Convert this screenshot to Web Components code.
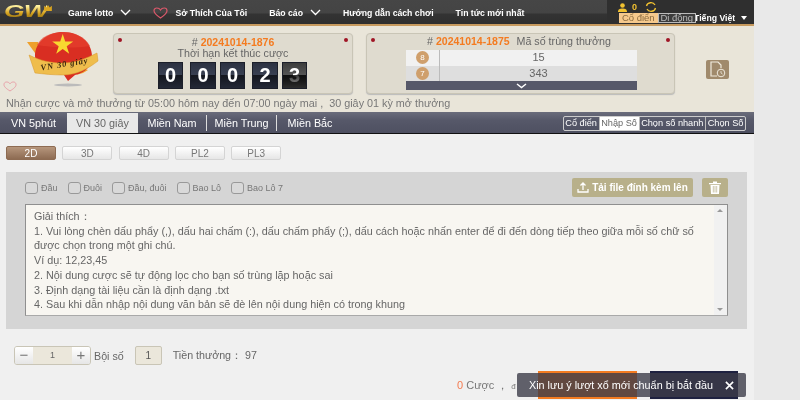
<!DOCTYPE html>
<html lang="vi">
<head>
<meta charset="utf-8">
<title>VN 30 giây</title>
<style>
  html, body { margin: 0; height: 400px; overflow: hidden; background: #e9e9e9; }
  body { font: 11px "Liberation Sans", Arial, sans-serif; color: #666; }
</style>
</head>
<body>
<gw-app>
  <gw-topbar></gw-topbar>
  <gw-draw-header></gw-draw-header>
  <gw-tabs></gw-tabs>
  <gw-bet-panel></gw-bet-panel>
  <gw-toast>Xin lưu ý lượt xổ mới chuẩn bị bắt đầu</gw-toast>
</gw-app>

<script>
class GwApp extends HTMLElement {
  constructor() {
    super();
    this.attachShadow({ mode: 'open' }).innerHTML = `
      <style>
      :host { display: block; position: relative; width: 754px; height: 400px; overflow: hidden; background: #f0f0f0; filter: blur(.35px); }
      </style>
      <slot></slot>`;
  }
}

class GwTopbar extends HTMLElement {
  constructor() {
    super();
    const chevron = `<svg width="11" height="7" viewBox="0 0 11 7"><path d="M1 1l4.500 4.500L10 1" fill="none" stroke="#fff" stroke-width="1.300"/></svg>`;
    this.attachShadow({ mode: 'open' }).innerHTML = `
      <style>
      :host { display: flex; align-items: center; box-sizing: border-box; height: 26px; background: linear-gradient(#464646 0, #444 13px, #333 14px, #2e2e2e 24px); border-bottom: 2px solid #c79a5e; color: #fff; font-size: 8.700px; font-weight: bold; }
      .logo { position: relative; width: 68px; flex: none; height: 24px; }
      .logo b { position: absolute; left: 4px; top: 2px; font: italic bold 17px/20px "Liberation Sans", sans-serif; letter-spacing: -.5px; transform: scaleX(1.550); transform-origin: 0 50%; background: linear-gradient(#fff2a0 20%, #d9a520 55%, #8a6a10 85%); -webkit-background-clip: text; background-clip: text; color: transparent; }
      .logo svg { position: absolute; left: 44px; top: 5px; }
      nav { display: flex; align-items: center; gap: 22px; flex: none; width: 539px; padding-top: 1px; }
      nav span { display: flex; align-items: center; gap: 7px; white-space: nowrap; }
      .right { position: relative; flex: 1; height: 24px; background: #2f2f2f; }
      .wallet { display: flex; align-items: center; gap: 5px; padding: 1px 0 0 11px; color: #f2c230; font-size: 9px; height: 12px; }
      .modes { display: flex; align-items: center; padding-left: 12px; font-weight: normal; }
      .modes i { font-style: normal; box-sizing: border-box; width: 38.500px; height: 10px; line-height: 10px; text-align: center; font-size: 9.500px; }
      .modes .on { background: #f6c98c; color: #8a6b3f; }
      .modes .off { position: relative; background: #3c3c3c; color: #bbb; border: 1px solid #bbb; line-height: 8px; }
      .lang { margin-left: -2px; font-weight: bold; font-size: 8.700px; white-space: nowrap; }
      .caret { margin-left: 6px; width: 0; height: 0; border: 3.500px solid transparent; border-top: 4px solid #fff; border-bottom: 0; }
      </style>
      <div class="logo"><b>GW</b>
        <svg width="8" height="6" viewBox="0 0 9 7"><path d="M0 7V1l2.500 2L4.500 0l2 3L9 1v6z" fill="#d9a520"/></svg>
      </div>
      <nav>
        <span>Game lotto ${chevron}</span>
        <span><svg width="15" height="12" viewBox="0 0 15 12"><path d="M7.500 11C3 8 1 6 1 3.800 1 2 2.300 1 3.800 1c1.500 0 3 .8 3.700 2 .7-1.200 2.200-2 3.700-2C12.700 1 14 2 14 3.800 14 6 12 8 7.500 11z" fill="none" stroke="#d9586a" stroke-width="1.200"/></svg>Sở Thích Của Tôi</span>
        <span>Báo cáo ${chevron}</span>
        <span>Hướng dẫn cách chơi</span>
        <span>Tin tức mới nhất</span>
      </nav>
      <div class="right">
        <div class="wallet">
          <svg width="9" height="9" viewBox="0 0 9 9"><circle cx="4.500" cy="2.500" r="2.300" fill="#f2c230"/><path d="M0 9c0-3 2-3.500 4.500-3.500S9 6 9 9z" fill="#f2c230"/></svg>
          <span>0</span>
          <svg width="12" height="10" viewBox="0 0 12 10" style="margin-left:3px"><path d="M1.500 4A4.500 4 0 0 1 10 3M10.500 6A4.500 4 0 0 1 2 7" fill="none" stroke="#f2c230" stroke-width="1.300"/></svg>
        </div>
        <div class="modes"><i class="on">Cổ điển</i><i class="off">Di động</i><span class="lang">Tiếng Việt</span><span class="caret"></span></div>
      </div>`;
  }
}

class GwDrawHeader extends HTMLElement {
  constructor() {
    super();
    const digits = [0, 0, 0, 2, 3].map(d => `<b>${d}</b>`).join('');
    this.attachShadow({ mode: 'open' }).innerHTML = `
      <style>
      :host { display: block; box-sizing: border-box; height: 86px; padding-top: 7px; background: #e9e5d9; }
      .row { display: flex; height: 61px; }
      .emblem { width: 113px; flex: none; }
      .panel { position: relative; box-sizing: border-box; height: 61px; background: #dfdbcf; border: 1px solid #c9c5b6; border-radius: 4px; box-shadow: 0 1px 1px #bbb; text-align: center; color: #666; font-size: 10.700px; }
      .panel::before, .panel::after { content: ""; position: absolute; top: 4px; width: 4px; height: 4px; border-radius: 50%; background: #a01525; }
      .panel::before { left: 4px; }
      .panel::after { right: 4px; }
      em { font-style: normal; font-weight: bold; font-size: 10.500px; color: #f47b20; }
      .timer { width: 240px; padding-top: 3px; line-height: 11px; }
      .digits { display: flex; justify-content: center; margin-top: 3px; padding-right: 1px; }
      .digits b { position: relative; width: 25.500px; height: 27px; line-height: 26px; background: linear-gradient(#2b3040 0, #394052 47%, #14161e 49%, #252a38 100%); box-shadow: inset 0 0 0 1px #1c1f2a; color: #fff; font-size: 20px; font-weight: bold; text-align: center; }
      .digits b + b { margin-left: 7px; }
      .digits b:nth-child(3), .digits b:nth-child(5) { margin-left: 4px; }
      .digits b:nth-child(5) { background: linear-gradient(#3a3a3a, #555 47%, #111 49%, #333); }
      .digits b:nth-child(5)::after { content: ""; position: absolute; left: 1px; right: 1px; top: 13px; bottom: 1px; background: linear-gradient(rgba(15, 15, 15, .85), rgba(40, 40, 40, .4)); }
      .result { width: 309px; margin-left: 13px; line-height: 15px; }
      .result h3 { margin: 0 0 1px; font: inherit; padding-right: 3px; }
      .result h3 span { margin-left: 4px; }
      .table { width: 231px; margin-left: 39px; }
      .line { display: flex; height: 15.500px; line-height: 15.500px; font-size: 11px; background: #f1f1f1; }
      .line + .line { background: #dedede; }
      .line i { width: 34px; flex: none; display: flex; align-items: center; justify-content: center; border-right: 1px solid #bbb; box-sizing: border-box; font-style: normal; }
      .line i u { width: 13px; height: 13px; line-height: 13px; border-radius: 50%; background: #cf9f6c; color: #fff; font-size: 8px; text-decoration: none; }
      .line span { flex: 1; }
      .more { display: flex; align-items: center; justify-content: center; height: 9px; background: #565869; }
      .history { margin: 27px 0 0 31px; width: 23px; height: 19px; background: #a08a6c; border-radius: 2px; display: flex; align-items: center; justify-content: center; }
      .info { margin: 2px 0 0 6px; font-size: 10.800px; line-height: 14px; color: #777; white-space: nowrap; }
      </style>
      <div class="row">
        <div class="emblem">
          <svg width="113" height="61" viewBox="0 33 113 61" overflow="visible">
            <ellipse cx="68" cy="85" rx="14" ry="1.500" fill="#bbb"/>
            <path d="M27 42h11l3 14-6-3z" fill="#eea02c"/>
            <path d="M76 75l9-6 3 1-5 3z" fill="#eea02c"/>
            <path d="M63 32c17 0 29 11 29 24 0 10-7 17-17 19l-7 6-4-6c-13-1-29-8-29-19 0-14 13-24 28-24z" fill="#d92e22"/>
            <path d="M63 32c12 0 22 5 27 14-20 3-40 1-53-1 4-8 14-13 26-13z" fill="#e6402d" opacity=".7"/>
            <path d="M62.700 34l2.500 7.500h8l-6.500 4.700 2.500 7.600-6.500-4.700-6.500 4.700 2.500-7.600-6.500-4.700h8z" fill="#f8d930"/>
            <path d="M29 55c12 6 22 8 33 8 14 0 25-5 35-10l1 8c-9 7-21 14-35 14-10 0-19-1-28-2z" fill="#efbd4c" stroke="#d9982a" stroke-width=".5"/>
            <text x="41" y="70.500" transform="rotate(-9 41 70.500)" font-family="Liberation Serif" font-style="italic" font-weight="bold" font-size="8.500" fill="#3a2a10" letter-spacing=".9">VN 30 giây</text>
            <path d="M10 91c-4-2.500-6-4.300-6-6.300C4 83 5 82 6.700 82c1.400 0 2.600.7 3.300 1.800.7-1.100 1.900-1.800 3.300-1.800 1.700 0 2.700 1 2.700 2.700 0 2-2 3.800-6 6.300z" fill="none" stroke="#e8a0a8"/>
          </svg>
        </div>
        <div class="panel timer">
          <div># <em>20241014-1876</em></div>
          <div>Thời hạn kết thúc cược</div>
          <div class="digits">${digits}</div>
        </div>
        <div class="panel result">
          <h3># <em>20241014-1875</em> <span>Mã số trùng thưởng</span></h3>
          <div class="table">
            <div class="line"><i><u>8</u></i><span>15</span></div>
            <div class="line"><i><u>7</u></i><span>343</span></div>
            <div class="more"><svg width="11" height="6" viewBox="0 0 11 6"><path d="M1 1l4.500 3.500L10 1" fill="none" stroke="#fff" stroke-width="1.500"/></svg></div>
          </div>
        </div>
        <div class="history">
          <svg width="19" height="17" viewBox="0 0 19 17"><path d="M9 15H3V1h7l3 3v3" fill="none" stroke="#efe9dc" stroke-width="1.200"/><circle cx="13" cy="12" r="3.800" fill="#a08a6c" stroke="#efe9dc"/><path d="M13 10v2l1.500 1" fill="none" stroke="#efe9dc" stroke-width=".8"/></svg>
        </div>
      </div>
      <div class="info">Nhận cược và mở thưởng từ 05:00 hôm nay đến 07:00 ngày mai ,&nbsp; 30 giây 01 kỳ mở thưởng</div>`;
  }
}

class GwTabs extends HTMLElement {
  constructor() {
    super();
    this.attachShadow({ mode: 'open' }).innerHTML = `
      <style>
      :host { display: flex; align-items: stretch; box-sizing: border-box; height: 22px; background: linear-gradient(#6a6c7b, #565869 40%, #4e5061); border-bottom: 1px solid #111; color: #fff; font-size: 10.800px; padding-top: 1px; }
      .tab { display: flex; align-items: center; justify-content: center; box-sizing: border-box; height: 20px; }
      .tab.on { background: #e8e8e8; color: #666; }
      .sep { border-right: 1px solid #ddd; height: 16px; margin-top: 2px; }
      .sub { display: flex; margin: 3px 8px 0 auto; height: 13px; border: 1px solid #ccc; border-radius: 2px; font-size: 9.200px; line-height: 12px; }
      .sub span { padding: 0 1.600px; white-space: nowrap; }
      .sub span + span { border-left: 1px solid #bbb; }
      .sub .on { background: #fff; color: #666; }
      </style>
      <div class="tab" style="width:67px">VN 5phút</div>
      <div class="tab on" style="width:71px">VN 30 giây</div>
      <div class="tab sep" style="width:69px">Miền Nam</div>
      <div class="tab sep" style="width:70px">Miền Trung</div>
      <div class="tab" style="width:66px">Miền Bắc</div>
      <div class="sub"><span>Cổ điển</span><span class="on">Nhập Số</span><span>Chọn số nhanh</span><span>Chọn Số</span></div>`;
  }
}

class GwBetPanel extends HTMLElement {
  constructor() {
    super();
    const games = ['2D', '3D', '4D', 'PL2', 'PL3']
      .map((g, i) => `<span class="${i ? '' : 'on'}">${g}</span>`).join('');
    const checks = ['Đầu', 'Đuôi', 'Đầu, đuôi', 'Bao Lô', 'Bao Lô 7']
      .map(c => `<label><i></i>${c}</label>`).join('');
    this.attachShadow({ mode: 'open' }).innerHTML = `
      <style>
      :host { display: block; padding: 12px 7px 0 6px; font-size: 11px; color: #666; }
      .games { display: flex; gap: 6.300px; }
      .games span { box-sizing: border-box; width: 50px; height: 14px; line-height: 13px; text-align: center; background: linear-gradient(#fff, #e6e6e6); border: 1px solid #d4d4d4; border-radius: 2px; color: #777; font-size: 10px; }
      .games .on { background: linear-gradient(#b6967c, #8d6b52); border-color: #8d6b52; color: #fff; }
      .box { box-sizing: border-box; height: 157px; margin-top: 12px; padding: 6px 19px 0; background: #d5d5d5; }
      .tools { display: flex; align-items: center; height: 19px; margin-bottom: 7px; }
      label { display: flex; align-items: center; gap: 3px; margin-right: 10px; font-size: 9px; color: #777; }
      label i { box-sizing: border-box; width: 13px; height: 12px; border: 1px solid #999; border-radius: 3px; background: #d9d9d9; }
      .btn { display: flex; align-items: center; justify-content: center; gap: 3px; height: 19px; background: #b8b08a; border-radius: 2px; color: #fff; font-size: 10px; font-weight: bold; }
      .upload { width: 121px; margin-left: auto; }
      .trash { width: 26px; margin-left: 9px; }
      .text { box-sizing: border-box; position: relative; height: 112px; padding: 4px 30px 0 8px; background: #f8f6f1; border: 1px solid #8f8f8f; border-bottom-color: #a9a9a9; line-height: 14.700px; font-size: 10.800px; color: #666; white-space: nowrap; }
      .text p { margin: 0; }
      .bar { position: absolute; top: 0; right: 0; bottom: 0; width: 13px; background: #f1f1f1; }
      .bar::before, .bar::after { content: ""; position: absolute; left: 3px; border: 3px solid transparent; }
      .bar::before { top: 4px; border-bottom: 3px solid #999; border-top: 0; }
      .bar::after { bottom: 4px; border-top: 3px solid #999; border-bottom: 0; }
      .amount { display: flex; align-items: center; height: 19px; margin: 17px 0 0 8px; font-size: 10.700px; }
      .stepper { display: flex; box-sizing: border-box; width: 77px; height: 19px; border: 1px solid #c9c5b6; border-radius: 3px; overflow: hidden; }
      .stepper b { width: 18px; text-align: center; background: linear-gradient(#fff, #e6e6e6); font: 15px/15px "Liberation Sans", sans-serif; color: #777; }
      .stepper span { flex: 1; line-height: 17px; text-align: center; background: #ebe7db; font-size: 9px; }
      .mult { box-sizing: border-box; width: 27px; height: 19px; margin: 0 11px; line-height: 17px; text-align: center; background: #ebe7db; border: 1px solid #c9c5b6; border-radius: 2px; color: #555; font-size: 10px; }
      .submit { display: flex; align-items: center; height: 28px; margin-top: 6px; }
      .count { margin-left: 451px; font-size: 11px; color: #777; white-space: nowrap; width: 81px; }
      .count em { font-style: normal; color: #f47b50; }
      .count small { font-size: 8px; }
      .go { box-sizing: border-box; width: 99px; height: 28px; background: #f47b20; }
      .clear { box-sizing: border-box; width: 88px; height: 28px; margin-left: 13px; background: #1e2140; }
      </style>
      <div class="games">${games}</div>
      <div class="box">
        <div class="tools">
          ${checks}
          <span class="btn upload"><svg width="12" height="11" viewBox="0 0 12 11"><path d="M6 8V1M3.500 3.500L6 1l2.500 2.500M1 7v3h10V7" fill="none" stroke="#fff" stroke-width="1.300"/></svg>Tải file đính kèm lên</span>
          <span class="btn trash"><svg width="12" height="13" viewBox="0 0 12 13"><path d="M0 2h12v1.300H0zM4 .500h4V2H4zM1.500 4h9L10 13H2z" fill="#fff"/><path d="M4.300 5v6.500M6 5v6.500M7.700 5v6.500" stroke="#b8b08a" stroke-width=".7"/></svg></span>
        </div>
        <div class="text">
          <p>Giải thích：</p>
          <p>1. Vui lòng chèn dấu phẩy (,), dấu hai chấm (:), dấu chấm phẩy (;), dấu cách hoặc nhấn enter để đi đến dòng tiếp theo giữa mỗi số chữ số<br>được chọn trong một ghi chú.</p>
          <p>Ví dụ: 12,23,45</p>
          <p>2. Nội dung cược sẽ tự động lọc cho bạn số trùng lặp hoặc sai</p>
          <p>3. Định dạng tài liệu cần là định dạng .txt</p>
          <p>4. Sau khi dẫn nhập nội dung văn bản sẽ đè lên nội dung hiện có trong khung</p>
          <div class="bar"></div>
        </div>
      </div>
      <div class="amount">
        <div class="stepper"><b>−</b><span>1</span><b>+</b></div>
        <span style="margin-left:3px">Bội số</span>
        <span class="mult">1</span>
        <span>Tiền thưởng： 97</span>
      </div>
      <div class="submit">
        <span class="count"><em>0</em> Cược ， <small>đ</small></span>
        <span class="go"></span><span class="clear"></span>
      </div>`;
  }
}

class GwToast extends HTMLElement {
  constructor() {
    super();
    this.attachShadow({ mode: 'open' }).innerHTML = `
      <style>
      :host { position: absolute; left: 517px; top: 373px; box-sizing: border-box; display: flex; align-items: center; width: 229px; height: 24px; padding: 0 12px 0 12px; background: rgba(60, 60, 72, .8); border-radius: 2px; color: #fff; font-size: 10.800px; white-space: nowrap; }
      svg { margin-left: auto; }
      </style>
      <slot></slot>
      <svg width="9" height="9" viewBox="0 0 10 10"><path d="M1 1l8 8M9 1l-8 8" stroke="#fff" stroke-width="1.800"/></svg>`;
  }
}

customElements.define('gw-app', GwApp);
customElements.define('gw-topbar', GwTopbar);
customElements.define('gw-draw-header', GwDrawHeader);
customElements.define('gw-tabs', GwTabs);
customElements.define('gw-bet-panel', GwBetPanel);
customElements.define('gw-toast', GwToast);
</script>
</body>
</html>
